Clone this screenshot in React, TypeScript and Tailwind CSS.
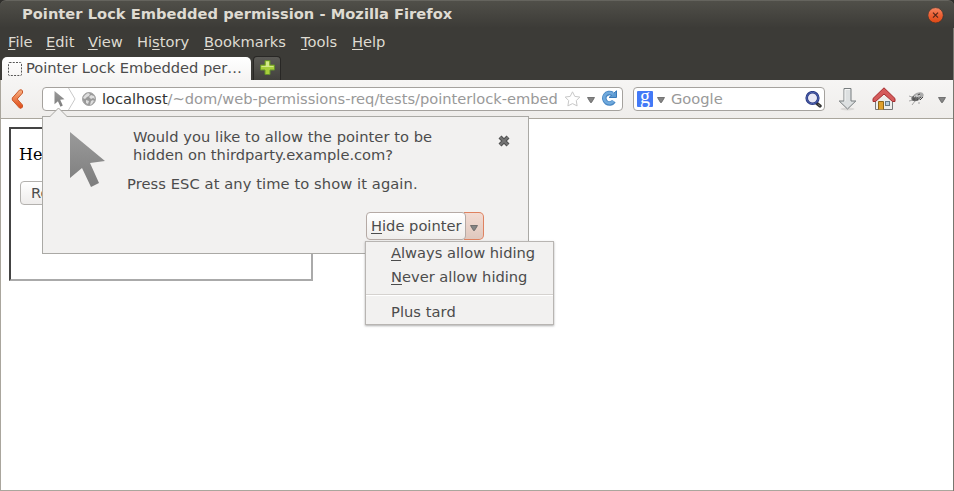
import React from "react";

const menus: [string, string, string, string][] = [
  ["", "F", "ile", "w-[38px]"],
  ["", "E", "dit", "w-[42px]"],
  ["", "V", "iew", "w-[49px]"],
  ["Hi", "s", "tory", "w-[67px]"],
  ["", "B", "ookmarks", "w-[97px]"],
  ["", "T", "ools", "w-[51px]"],
  ["", "H", "elp", "w-[40px]"],
];

function Pointer({ className }: { className: string }) {
  return (
    <svg className={className} viewBox="0 0 35 56">
      <defs>
        <linearGradient id="pointer" x1="0" y1="0" x2="0" y2="1">
          <stop offset="0" stopColor="#9a9a9a" />
          <stop offset="1" stopColor="#7d7d7d" />
        </linearGradient>
      </defs>
      <path d="M0 0 L35 29 L20 31 L29 51 L21 55 L12 36 L0 46 Z" fill="url(#pointer)" />
    </svg>
  );
}

function Caret({ className = "" }: { className?: string }) {
  return (
    <svg className={`h-[6px] w-[8px] shrink-0 ${className}`} viewBox="0 0 8 6">
      <path d="M.5 .5h7L4.5 5.5h-1z" fill="#858585" stroke="#606060" strokeWidth=".8" />
    </svg>
  );
}

function TitleBar() {
  return (
    <div className="flex h-7 items-start justify-between rounded-t-md border-t border-[#65645e] bg-gradient-to-b from-[#504f49] to-[#3c3b37] pl-[22px] pr-[10px]">
      <span className="mt-[3px] text-[14.67px] font-bold leading-[19px] tracking-[0.02px] text-[#dfdbd2]">Pointer Lock Embedded permission - Mozilla Firefox</span>
      <svg className="mt-[6px] h-4 w-4" viewBox="0 0 16 16">
        <defs>
          <linearGradient id="close" x1="0" y1="0" x2="0" y2="1">
            <stop offset="0" stopColor="#f58763" />
            <stop offset=".5" stopColor="#ec6034" />
            <stop offset="1" stopColor="#dd4814" />
          </linearGradient>
        </defs>
        <circle cx="7.6" cy="8.3" r="7.7" fill="url(#close)" stroke="#35322e" strokeWidth=".7" />
        <path d="m5 5.7 5 5m0-5-5 5" stroke="#512619" strokeWidth="1.2" />
      </svg>
    </div>
  );
}

function Tabs() {
  return (
    <div className="flex h-6 items-end gap-[2px] pl-[2px]">
      <div className="flex h-[23px] w-[249px] items-center rounded-t-[5px] bg-gradient-to-b from-white to-[#f5f4f3] pl-[6px] text-[#4c4c4c]">
        <svg className="mr-1 h-[14px] w-[14px] shrink-0" viewBox="0 0 14 14">
          <rect x=".5" y=".5" width="13" height="13" rx="1" fill="none" stroke="#555" strokeDasharray="2 1.25" />
        </svg>
        <span className="mb-[2px] whitespace-nowrap text-[14.67px] leading-[21px] tracking-[-0.03px]">Pointer Lock Embedded per…</span>
      </div>
      <div className="flex h-6 w-7 items-center justify-center rounded-t-[4px] border border-b-0 border-[#282725] bg-gradient-to-b from-[#5b5a56] to-[#42413d]">
        <svg className="mt-[-2px] h-[17px] w-[17px]" viewBox="0 0 17 17">
          <path d="M6 1.5h5V6h4.5v5H11v4.5H6V11H1.5V6H6z" fill="#a8cf3b" stroke="#64912a" />
          <path d="M7 2.5h3V7h4.5v1H2.5V7H7z" fill="#d4e98a" />
        </svg>
      </div>
    </div>
  );
}

function AddressBar() {
  return (
    <div className="flex h-6 w-[581px] items-center rounded-[4px] border border-[#a5a29e] bg-white">
      <div className="flex w-[25px] shrink-0 justify-end pr-[3px]">
        <Pointer className="h-[16px] w-[11px]" />
      </div>
      <svg className="h-[22px] w-[8px] shrink-0" viewBox="0 0 8 22">
        <path d="m.5 0 6.5 11L.5 22" fill="none" stroke="#c8c8c8" />
      </svg>
      <svg className="ml-[6px] h-[14px] w-[14px] shrink-0" viewBox="0 0 14 14">
        <circle cx="7" cy="7" r="6.5" fill="#999" stroke="#a5a5a5" />
        <path d="M1 6 3 3 6 1l2 1-1 2-2 1-2 2zM9 3l3 1 1 3-2-1-2 1-2-2zM4 8l3 1-1 3-2-1zM9 9l2-1 1 1-2 3-2 1z" fill="#dedede" />
      </svg>
      <span className="ml-[6px] w-[457px] shrink-0 whitespace-nowrap text-[14.67px] leading-[22px] tracking-[-0.02px] text-[#999]"><span className="text-[#333]">localhost</span>/~dom/web-permissions-req/tests/pointerlock-embed</span>
      <svg className="ml-[5px] h-4 w-4 shrink-0" viewBox="0 0 16 16">
        <path d="m8.5 .8 2.3 4.6 5 .6-3.5 3.6.8 5.3-4.6-2.3-4.6 2.3.8-5.3L1.2 6l5-.6z" fill="#fff" stroke="#c8c8c8" strokeLinejoin="round" />
      </svg>
      <Caret className="ml-[7px] mt-[2px]" />
      <svg className="ml-[6px] mt-[-2px] h-4 w-4 shrink-0" viewBox="0 0 16 16">
        <path d="M12.8 11.2A5.2 5.2 0 1 1 11.5 4" fill="none" stroke="#4a88c4" strokeWidth="4.6" />
        <path d="M8 7.5h7.5V.8L13 3z" fill="#5e9bd2" stroke="#397ab9" />
        <path d="M12.6 11A5.2 5.2 0 1 1 12.2 4.5" fill="none" stroke="#70a9dc" strokeWidth="2.6" />
      </svg>
    </div>
  );
}

function SearchBar() {
  return (
    <div className="ml-[10px] flex h-6 w-[192px] items-center rounded-[4px] border border-[#a5a29e] bg-white pl-[3px] pr-[2px]">
      <span className="h-4 w-4 shrink-0 rounded-[1px] bg-[#4279f7] text-center font-['Liberation_Serif',serif] text-[20px] leading-[10px] text-white">g</span>
      <Caret className="ml-[4px] mt-[2px]" />
      <span className="ml-[6px] text-[14.67px] leading-[22px] text-[#999]">Google</span>
      <svg className="ml-auto h-[17px] w-[17px]" viewBox="0 0 17 17">
        <path d="m12 12.5 3 2.5" stroke="#333" strokeWidth="3.4" strokeLinecap="round" />
        <path d="m13.5 13.7 1 .8" stroke="#aaa" strokeWidth="1" />
        <circle cx="7.5" cy="7" r="5.8" fill="#e8e8f5" stroke="#26357f" strokeWidth="2.6" />
        <circle cx="7.5" cy="7" r="5.8" fill="none" stroke="#5369b5" strokeWidth="1" />
      </svg>
    </div>
  );
}

function Toolbar() {
  return (
    <div className="flex h-[39px] items-start border-b border-[#aaa69d] bg-gradient-to-b from-[#f6f5f4] to-[#efedeb] pt-[7px]">
      <svg className="ml-[10px] mr-[18px] mt-[2px] h-[20px] w-[13px] shrink-0" viewBox="0 0 13 20">
        <defs>
          <linearGradient id="back" x1="0" y1="0" x2="0" y2="1">
            <stop offset="0" stopColor="#f7b183" />
            <stop offset="1" stopColor="#df4a16" />
          </linearGradient>
        </defs>
        <path d="M8.5 1Q11 0 11.5 2v2L6.2 10l5.3 6v2q-1 2-3 1L1.3 11V9z" fill="url(#back)" stroke="#ca5829" />
      </svg>
      <AddressBar />
      <SearchBar />
      <svg className="ml-[13px] mt-[1px] h-[23px] w-[19px]" viewBox="0 0 19 23">
        <ellipse cx="9.5" cy="21" rx="7" ry="1.5" fill="#dad8d6" />
        <path d="M6 .5h7v12.500h4.800L9.500 21 1.200 13H6z" fill="#dde0e1" stroke="#777c7e" />
        <path d="M7 13V1.500h5" fill="none" stroke="#f6f6f6" />
      </svg>
      <svg className="ml-[15px] h-6 w-6" viewBox="0 0 24 24">
        <path d="M3.5 11v11.5h17V11L12 3z" fill="#eeeeec" stroke="#777" />
        <path d="M6.5 22.5v-8h5v8" fill="#dfa02b" stroke="#8e6517" />
        <rect x="13.5" y="14.5" width="4" height="4" fill="#b8cedf" stroke="#667a85" />
        <path d="M12 .8 1 11.5V14.5h2.500L12 7l8.500 7.500H23v-3z" fill="#d55b5b" stroke="#a42c2f" />
      </svg>
      <svg className="ml-[12px] mt-[4px] h-4 w-4" viewBox="0 0 16 16">
        <path d="M4 6 1 5m4 4-4 1m6 0-3 4m7-3 0 2M10 4 9 2" stroke="#a5a5a5" />
        <ellipse cx="10" cy="5.5" rx="6" ry="3.8" transform="rotate(-25 10 5.5)" fill="#aaa" />
        <ellipse cx="7" cy="7.5" rx="3.6" ry="2.8" fill="#666" />
        <path d="m6 6 3-2m1 4 4-1m-6-1 4-2" stroke="#ddd" />
        <path d="m9 9 4-3m-1 3 3-3M5 8h2m3-4 2-1" stroke="#444" />
      </svg>
      <Caret className="ml-[14px] mt-[10px]" />
    </div>
  );
}

function ActionMenu() {
  return (
    <div className="absolute left-[322px] top-[124px] h-[84px] w-[189px] border border-[#b8b5b2] bg-[#f2f1f0] text-[14.67px] text-[#4c4c4c] shadow-[0_1px_2px_#77777799]">
      <div className="h-6 pl-[25px] leading-[22px]"><u className="underline-offset-2">A</u>lways allow hiding</div>
      <div className="h-6 pl-[25px] leading-[22px]"><u className="underline-offset-2">N</u>ever allow hiding</div>
      <div className="mt-1 h-[2px] border-b border-white bg-[#d5d2cf]" />
      <div className="mt-[5px] pl-[25px] leading-[22px] tracking-[0.05px]">Plus tard</div>
    </div>
  );
}

function PermissionPopup() {
  return (
    <div className="absolute left-[41px] top-[-3px] h-[138px] w-[487px] border border-[#aaa9a5] bg-[#f2f1f0] text-[14.67px] leading-[18px] text-[#4c4c4c]">
      <svg className="absolute left-[5px] top-[-10px] h-[11px] w-[21px]" viewBox="0 0 21 11">
        <path d="M1 11 10.5 1 20 11" fill="#f2f1f0" />
        <path d="M0 9.5h2L10.5 1 19 9.5h2" fill="none" stroke="#aaa9a5" />
      </svg>
      <div className="flex h-[95px] pl-[27px]">
        <Pointer className="mt-[15px] h-[56px] w-[35px]" />
        <div className="ml-[22px] w-[360px] pt-[11px]">
          <p className="ml-[6px] tracking-[0.055px]">Would you like to allow the pointer to be<br /><span className="tracking-normal">hidden on thirdparty.example.com?</span></p>
          <p className="mt-[11px] tracking-[0.09px]">Press ESC at any time to show it again.</p>
        </div>
        <svg className="ml-[10px] mt-[17px] h-[14px] w-[14px]" viewBox="0 0 14 14">
          <path d="m3 3 8 8m0-8-8 8" stroke="#505050" strokeWidth="4.2" />
          <path d="m3.200 3.200 7.600 7.600m0-7.600-7.600 7.600" stroke="#747474" strokeWidth="2" />
        </svg>
      </div>
      <div className="ml-[323px] flex h-[28px] w-[118px]">
        <div className="relative w-[100px] rounded-[4px] border border-[#b5aaa5] bg-gradient-to-b from-white to-[#efedeb] pl-[4px] leading-[26px]"><u className="underline-offset-2">H</u>ide pointer</div>
        <div className="ml-[-2px] flex w-5 items-center justify-center rounded-r-[5px] border border-l-0 border-[#df8260] bg-gradient-to-b from-[#f3dcd3] to-[#dfc8be] pt-1"><Caret /></div>
      </div>
      <ActionMenu />
    </div>
  );
}

export default function App() {
  return (
    <div className="flex h-[491px] w-[954px] flex-col overflow-hidden bg-[#302f2c] font-['DejaVu_Sans',sans-serif]">
      <TitleBar />
      <div className="flex grow flex-col border-r border-[#77766f] bg-[#3c3b37]">
        <nav className="flex h-7 pl-2 text-[14.67px] leading-7 text-[#dfdbd2]">
          {menus.map(([before, key, after, width]) => (
            <span className={width} key={after}>{before}<u className="underline-offset-2">{key}</u>{after}</span>
          ))}
        </nav>
        <Tabs />
        <div className="flex grow flex-col border-b border-l border-[#aaa69d]">
          <Toolbar />
          <main className="relative grow bg-white pl-2 pt-2">
            <section className="h-[154px] w-[304px] border-2 border-b-[#aaa] border-l-[#444] border-r-[#aaa] border-t-[#444] pl-2 pt-[16px]">
              <p className="font-['DejaVu_Serif',serif] text-[16px] leading-[19px] text-black">He</p>
              <div className="ml-[1px] mt-[17px] h-6 w-20 rounded-[4px] border border-[#b3b1ae] bg-gradient-to-b from-white to-[#eeeceb] pl-[10px] text-[14.67px] leading-[22px] text-[#4c4c4c]">Re</div>
            </section>
            <PermissionPopup />
          </main>
        </div>
      </div>
    </div>
  );
}
